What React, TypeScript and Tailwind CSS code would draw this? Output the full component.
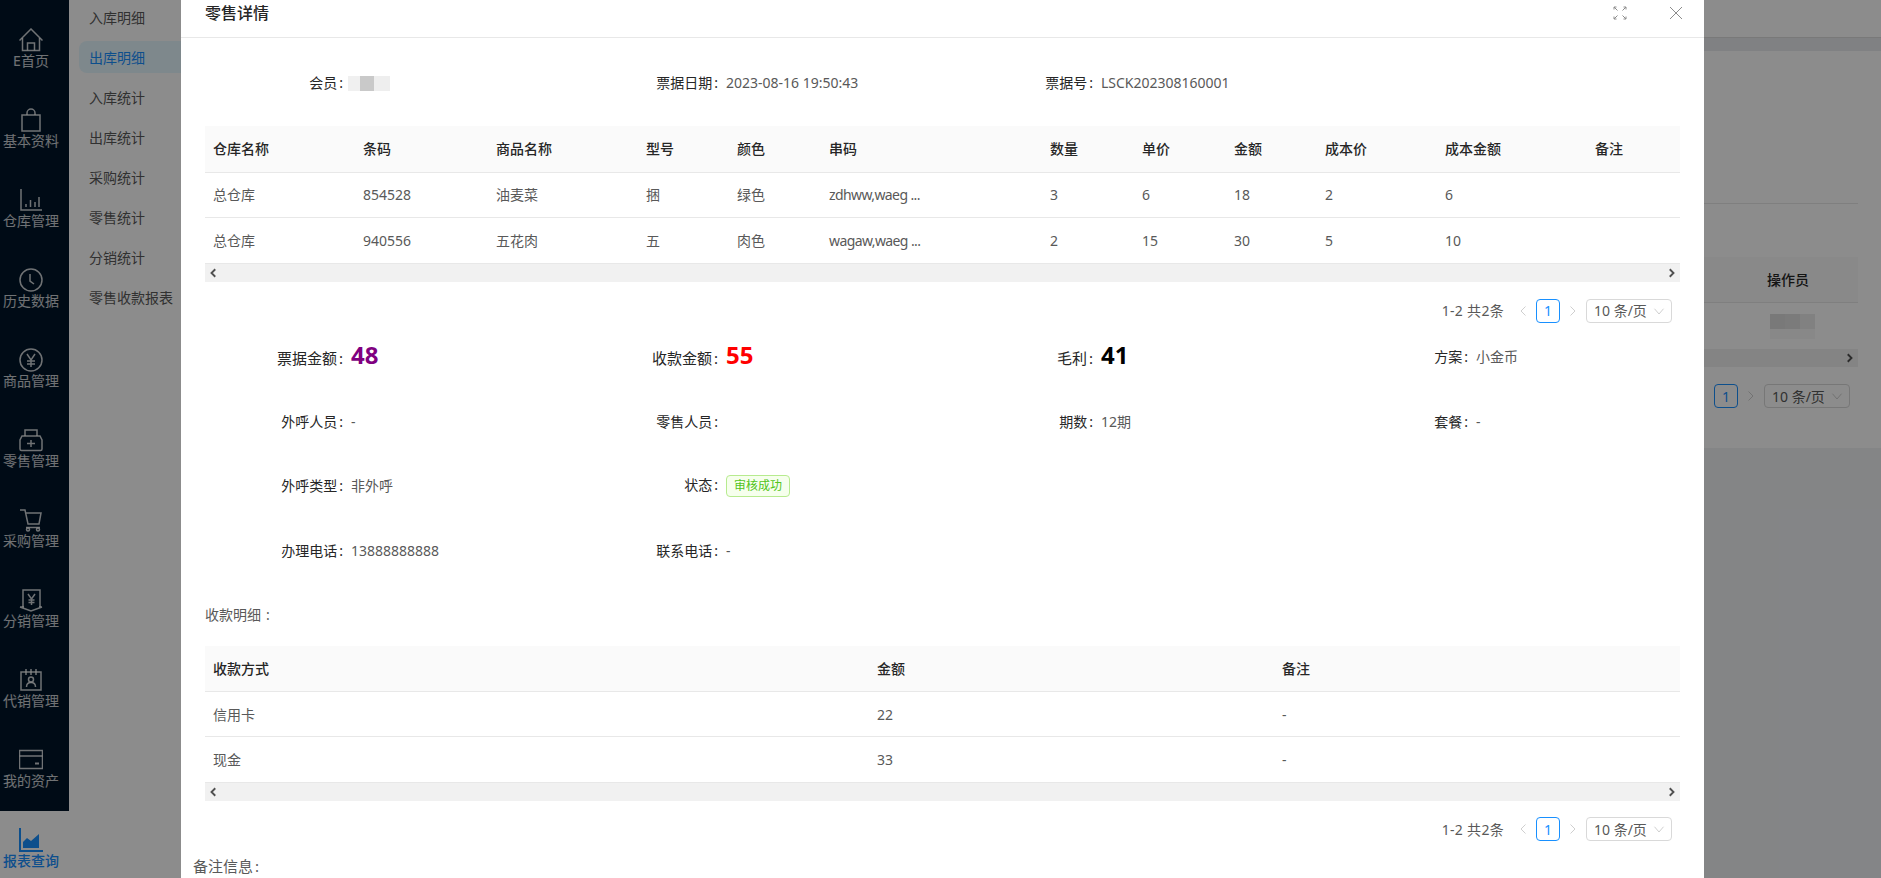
import type { ReactNode } from "react";

const navItems: { label: string; icon: ReactNode }[] = [
  {
    label: "E首页",
    icon: (
      <>
        <path d="M0.5 12.5 12 1l11.5 11.5" />
        <path d="M3.5 10v12.5h17V10" />
        <path d="M8.5 22.5V15h7v7.5" />
      </>
    ),
  },
  {
    label: "基本资料",
    icon: (
      <>
        <path d="M3 7h18v16H3z" />
        <path d="M8 7V5a4 4 0 0 1 8 0v2" />
      </>
    ),
  },
  {
    label: "仓库管理",
    icon: (
      <>
        <path d="M2 1v21h21" />
        <path d="M7 19v-3M11.500 19v-7M16 19v-5M20 19V9" />
      </>
    ),
  },
  {
    label: "历史数据",
    icon: (
      <>
        <circle cx="12" cy="12" r="11" />
        <path d="M11 6v7l4 3" />
      </>
    ),
  },
  {
    label: "商品管理",
    icon: (
      <>
        <circle cx="12" cy="12" r="11" />
        <path d="m8 6 4 6 4-6M12 12v7M8 13h8M8 16h8" />
      </>
    ),
  },
  {
    label: "零售管理",
    icon: (
      <>
        <path d="M3 8h18l2 4v9a1.500 1.500 0 0 1-1.500 1.500h-19A1.500 1.500 0 0 1 1 21v-9z" />
        <path d="M6 8V2h12v6M8 15.500h8M12 12v7" />
      </>
    ),
  },
  {
    label: "采购管理",
    icon: (
      <>
        <path d="M1 2h5l3 14h11l2-11H7" />
        <path d="M7 19.500h14" />
        <circle cx="9" cy="21.500" r="1.500" />
        <circle cx="19" cy="21.500" r="1.500" />
      </>
    ),
  },
  {
    label: "分销管理",
    icon: (
      <>
        <path d="M4 19V2h17v17" />
        <path d="M1 19h4M20 19h3M1 19l11 4 11-4" />
        <path d="m9 6 3.500 5L16 6M12.500 11v6M9.500 12h6M9.500 14.500h6" />
      </>
    ),
  },
  {
    label: "代销管理",
    icon: (
      <>
        <path d="M2 4h20v18H2z" />
        <path d="M7 1v6M12 1v6M17 1v6" />
        <circle cx="12" cy="11.500" r="2.500" />
        <path d="M7.500 19c0-3 2-4.500 4.500-4.500s4.500 1.500 4.500 4.500" />
      </>
    ),
  },
  {
    label: "我的资产",
    icon: (
      <>
        <path d="M0.500 2.500h23v18h-23z" />
        <path d="M0.500 8h23" />
        <path d="M16 15.500h4" strokeWidth="2" />
      </>
    ),
  },
];

const subItems = ["入库明细", "出库明细", "入库统计", "出库统计", "采购统计", "零售统计", "分销统计", "零售收款报表"];

const goodsColumns = [
  { title: "仓库名称", width: "w-[150px]" },
  { title: "条码", width: "w-[133px]" },
  { title: "商品名称", width: "w-[150px]" },
  { title: "型号", width: "w-[91px]" },
  { title: "颜色", width: "w-[92px]" },
  { title: "串码", width: "w-[221px]" },
  { title: "数量", width: "w-[92px]" },
  { title: "单价", width: "w-[92px]" },
  { title: "金额", width: "w-[91px]" },
  { title: "成本价", width: "w-[120px]" },
  { title: "成本金额", width: "w-[150px]" },
  { title: "备注", width: "w-[93px]" },
];

const goodsRows = [
  ["总仓库", "854528", "油麦菜", "捆", "绿色", "zdhww,waeg ...", "3", "6", "18", "2", "6", ""],
  ["总仓库", "940556", "五花肉", "五", "肉色", "wagaw,waeg ...", "2", "15", "30", "5", "10", ""],
];

const payColumns = [
  { title: "收款方式", width: "w-[664px]" },
  { title: "金额", width: "w-[405px]" },
  { title: "备注", width: "w-[406px]" },
];

const payRows = [
  ["信用卡", "22", "-"],
  ["现金", "33", "-"],
];

function Chevron({ dir, className }: { dir: "left" | "right" | "down"; className?: string }) {
  const d = dir === "left" ? "M10 2 4 8l6 6" : dir === "right" ? "m6 2 6 6-6 6" : "M2 5l6 7 6-7";
  return (
    <svg viewBox="0 0 16 16" fill="none" stroke="currentColor" className={className}>
      <path d={d} />
    </svg>
  );
}

function ScrollBar() {
  return (
    <div className="flex h-[18px] items-center justify-between bg-[#f1f1f1] px-[4px] text-[#505050]">
      <Chevron dir="left" className="h-[10px] w-[10px] stroke-[3]" />
      <Chevron dir="right" className="h-[10px] w-[10px] stroke-[3]" />
    </div>
  );
}

function DataTable({
  columns,
  rows,
}: {
  columns: { title: string; width: string }[];
  rows: string[][];
}) {
  return (
    <div className="ml-[12px] w-[1475px]">
      <table className="w-full table-fixed border-collapse text-left">
        <colgroup>
          {columns.map((col) => (
            <col key={col.title} className={col.width} />
          ))}
        </colgroup>
        <thead>
          <tr className="h-[46px] border-b border-[#e8e8e8] bg-[#fafafa]">
            {columns.map((col) => (
              <th key={col.title} className="px-[8px] font-medium text-[#262626]">
                {col.title}
              </th>
            ))}
          </tr>
        </thead>
        <tbody>
          {rows.map((row, i) => (
            <tr key={i} className={`border-b border-[#e8e8e8] ${i === 0 ? "h-[45px]" : "h-[46px]"}`}>
              {row.map((cell, j) => (
                <td
                  key={j}
                  className={`px-[8px] font-normal text-[#595959] ${cell.endsWith("...") ? "tracking-[-0.6px]" : ""}`}
                >
                  {cell}
                </td>
              ))}
            </tr>
          ))}
        </tbody>
      </table>
      <ScrollBar />
    </div>
  );
}

function Pagination({ showTotal = true }: { showTotal?: boolean }) {
  return (
    <div className="flex h-[24px] items-center justify-end text-[#595959]">
      {showTotal && <span className="mr-[14px] tracking-[0.3px]">1-2 共2条</span>}
      <Chevron dir="left" className="mr-[6px] h-[12px] w-[12px] text-[#bfbfbf]" />
      <span className="flex h-[24px] w-[24px] items-center justify-center rounded-[4px] border border-[#1890ff] text-[#1890ff]">
        1
      </span>
      <Chevron dir="right" className="ml-[6px] h-[12px] w-[12px] text-[#bfbfbf]" />
      <div className="ml-[8px] flex h-[24px] w-[86px] items-center justify-between rounded-[4px] border border-[#d9d9d9] pl-[7px] pr-[6px]">
        <span>10 条/页</span>
        <Chevron dir="down" className="h-[12px] w-[12px] text-[#bfbfbf]" />
      </div>
    </div>
  );
}

function Field({ label, children, large }: { label: string; children?: ReactNode; large?: boolean }) {
  return (
    <div className="flex w-[375px] items-baseline">
      <span className={`w-[158px] shrink-0 pr-[8px] text-right text-[#262626] ${large ? "text-[15px]" : ""}`}>
        {label}
        <span className="ml-[2px]">:</span>
      </span>
      <span className="text-[#595959]">{children}</span>
    </div>
  );
}

function BigValue({ value, color }: { value: string; color: string }) {
  return <span className={`text-[24px] leading-[24px] font-bold ${color}`}>{value}</span>;
}

function Background() {
  return (
    <div className="flex h-full min-w-0 flex-1 flex-col bg-[#f0f2f5]">
      <div className="h-[38px] border-b border-[#dcdcdc] bg-white" />
      <div className="h-[13px] bg-[#e9ebee]" />
      <div className="h-[397px] bg-white pr-[23px] pt-[152px]">
        <div className="h-px bg-[#e8e8e8]" />
        <div className="mt-[53px] flex h-[46px] items-center justify-end border-b border-[#e8e8e8] bg-[#fafafa] pr-[49px] font-medium text-[#262626]">
          操作员
        </div>
        <div className="flex h-[46px] flex-col items-end justify-center pr-[43px]">
          <div className="flex h-[15px] w-[45px]">
            <span className="w-[15px] bg-[#dcdcdc]" />
            <span className="w-[15px] bg-[#e0e0e0]" />
            <span className="w-[15px] bg-[#ececec]" />
          </div>
          <div className="h-[10px] w-[45px] bg-[#f7f7f7]" />
        </div>
        <ScrollBar />
        <div className="mt-[17px] pr-[8px]">
          <Pagination showTotal={false} />
        </div>
      </div>
    </div>
  );
}

function DetailModal() {
  return (
    <div className="absolute inset-y-0 left-[181px] w-[1523px] overflow-hidden bg-white">
      <div className="flex h-[38px] items-center justify-between border-b border-[#e8e8e8] pb-[11px] pl-[24px] pr-[21px]">
        <span className="text-[16px] font-medium text-[#262626]">零售详情</span>
        <div className="flex items-center gap-[42px] text-[#8c8c8c]">
          <svg viewBox="0 0 14 14" fill="none" stroke="currentColor" className="h-[14px] w-[14px]">
            <path d="m1 1 3.500 3.500M13 1 9.500 4.500M1 13l3.500-3.500M13 13 9.500 9.500" />
            <path d="M1 3.500V1h2.500M10.500 1H13v2.500M1 10.500V13h2.500M13 10.500V13h-2.500" />
          </svg>
          <svg viewBox="0 0 14 14" fill="none" stroke="currentColor" className="h-[14px] w-[14px]">
            <path d="m1 1 12 12M13 1 1 13" />
          </svg>
        </div>
      </div>
      <div className="pl-[12px] pt-[33px]">
        <div className="flex h-[22px] items-center">
          <Field label="会员">
            <span className="ml-[-3px] inline-flex h-[15px] w-[42px] align-middle">
              <span className="w-[12px] bg-[#f0f0f0]" />
              <span className="w-[14px] bg-[#c9c9c9]" />
              <span className="w-[16px] bg-[#eeeeee]" />
            </span>
          </Field>
          <Field label="票据日期">2023-08-16 19:50:43</Field>
          <Field label="票据号">LSCK202308160001</Field>
        </div>
        <div className="mt-[33px]">
          <DataTable columns={goodsColumns} rows={goodsRows} />
        </div>
        <div className="mt-[17px] w-[1487px] pr-[8px]">
          <Pagination />
        </div>
        <div className="mt-[19px] flex flex-col">
          <div className="mb-[35px] flex h-[29px] items-center">
            <Field label="票据金额" large>
              <BigValue value="48" color="text-[#800080]" />
            </Field>
            <Field label="收款金额" large>
              <BigValue value="55" color="text-[#ff0000]" />
            </Field>
            <Field label="毛利" large>
              <BigValue value="41" color="text-black" />
            </Field>
            <Field label="方案">小金币</Field>
          </div>
          <div className="mb-[32px] flex h-[32px] items-center">
            <Field label="外呼人员">-</Field>
            <Field label="零售人员" />
            <Field label="期数">12期</Field>
            <Field label="套餐">-</Field>
          </div>
          <div className="mb-[33px] flex h-[32px] items-center">
            <Field label="外呼类型">非外呼</Field>
            <Field label="状态">
              <span className="inline-block h-[22px] rounded-[4px] border border-[#b7eb8f] bg-[#f6ffed] px-[7px] text-[12px] leading-[20px] text-[#52c41a]">
                审核成功
              </span>
            </Field>
          </div>
          <div className="flex h-[32px] items-center">
            <Field label="办理电话">13888888888</Field>
            <Field label="联系电话">-</Field>
          </div>
        </div>
        <div className="ml-[12px] mt-[37px] h-[22px] leading-[22px] text-[#595959]">
          收款明细<span className="ml-[5px]">:</span>
        </div>
        <div className="mt-[20px]">
          <DataTable columns={payColumns} rows={payRows} />
        </div>
        <div className="mt-[16px] w-[1487px] pr-[8px]">
          <Pagination />
        </div>
        <div className="mt-[14px] text-[15px] leading-[22px] text-[#595959]">
          备注信息<span className="ml-[2px]">:</span>
        </div>
      </div>
    </div>
  );
}

export default function App() {
  return (
    <div className="relative flex h-[878px] w-[1881px] overflow-hidden bg-[#f0f2f5] font-['Noto_Sans','Noto_Sans_CJK_SC',sans-serif] text-[14px]">
      <aside className="flex h-full w-[69px] shrink-0 flex-col bg-[#001529] pt-[11px]">
        {navItems.map((item) => (
          <div key={item.label} className="flex h-[80px] shrink-0 flex-col items-center pr-[7px] text-white/80">
            <svg
              viewBox="0 0 24 24"
              fill="none"
              stroke="currentColor"
              strokeWidth="1.500"
              className="mt-[17px] h-[24px] w-[24px]"
            >
              {item.icon}
            </svg>
            <span className="mt-[-2px] leading-[22px] whitespace-nowrap">{item.label}</span>
          </div>
        ))}
        <div className="flex h-[80px] shrink-0 flex-col items-center bg-white pr-[7px] text-[#1890ff]">
          <svg viewBox="0 0 24 24" fill="currentColor" className="mt-[17px] h-[24px] w-[24px]">
            <path d="M0 0h2v22h22v2H0z" />
            <path d="M4 20v-6l4-4 4 3 8-7v14z" />
          </svg>
          <span className="mt-[-2px] leading-[22px] font-medium whitespace-nowrap">报表查询</span>
        </div>
      </aside>
      <nav className="h-full w-[112px] shrink-0 bg-white pt-px">
        {subItems.map((item) => (
          <div
            key={item}
            className={
              item === "出库明细"
                ? "mb-[8px] ml-[10px] flex h-[32px] items-center rounded-l-[8px] bg-[#e6f7ff] pl-[10px] text-[#1890ff]"
                : "mb-[8px] ml-[10px] flex h-[32px] items-center pl-[10px] whitespace-nowrap text-[#595959]"
            }
          >
            {item}
          </div>
        ))}
      </nav>
      <Background />
      <div className="absolute inset-0 bg-black/45" />
      <DetailModal />
    </div>
  );
}
